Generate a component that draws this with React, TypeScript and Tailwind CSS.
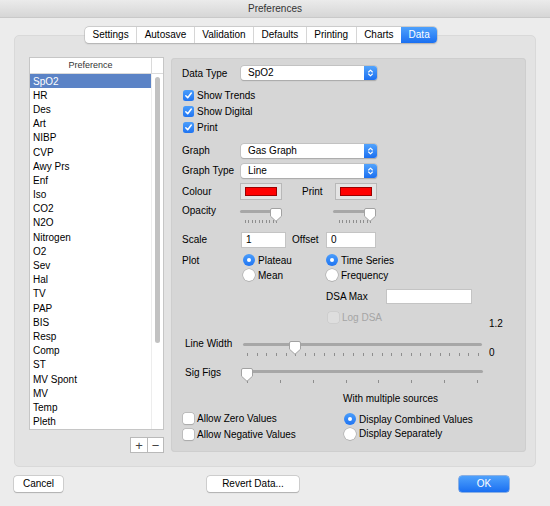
import React from 'react';

const prefs = [
  'SpO2', 'HR', 'Des', 'Art', 'NIBP', 'CVP', 'Awy Prs', 'Enf', 'Iso', 'CO2', 'N2O', 'Nitrogen', 'O2',
  'Sev', 'Hal', 'TV', 'PAP', 'BIS', 'Resp', 'Comp', 'ST', 'MV Spont', 'MV', 'Temp', 'Pleth',
];

const tabs = ['Settings', 'Autosave', 'Validation', 'Defaults', 'Printing', 'Charts', 'Data'];

function Select({ value }: { value: string }) {
  return (
    <div className="flex h-[14px] w-[136px] shrink-0 items-center rounded-[3px] bg-white shadow-[0_0_0_0.5px_#b3b3b3,0_0.5px_1px_rgba(0,0,0,0.25)]">
      <span className="flex-1 pl-[7px] leading-none">{value}</span>
      <div className="flex h-full w-[13px] items-center justify-center rounded-r-[3px] bg-linear-to-b from-[#52a3fc] to-[#1b6ff0]">
        <svg width="7" height="10" viewBox="0 0 7 10">
          <path
            d="M1.6 4 L3.5 2.1 L5.4 4 M1.6 6 L3.5 7.9 L5.4 6"
            fill="none"
            stroke="white"
            strokeWidth="1.1"
            strokeLinecap="round"
            strokeLinejoin="round"
          />
        </svg>
      </div>
    </div>
  );
}

function Checkbox({ checked, disabled }: { checked?: boolean; disabled?: boolean }) {
  if (checked) {
    return (
      <div className="flex h-[11px] w-[11px] shrink-0 items-center justify-center rounded-[2.5px] bg-linear-to-b from-[#4a9dfb] to-[#1f74f2]">
        <svg width="9" height="9" viewBox="0 0 9 9">
          <path d="M1.8 4.8 L3.7 6.8 L7.3 2" fill="none" stroke="white" strokeWidth="1.5" strokeLinecap="round" strokeLinejoin="round" />
        </svg>
      </div>
    );
  }
  return (
    <div
      className={`h-[11px] w-[11px] shrink-0 rounded-[2.5px] ${
        disabled
          ? 'bg-[#dedede] shadow-[0_0_0_0.5px_#c6c6c6]'
          : 'bg-white shadow-[0_0_0_0.5px_#a9a9a9,0_0.5px_1px_rgba(0,0,0,0.2)]'
      }`}
    />
  );
}

function Radio({ checked }: { checked?: boolean }) {
  if (checked) {
    return (
      <div className="flex h-[12px] w-[12px] shrink-0 items-center justify-center rounded-full bg-linear-to-b from-[#4a9dfb] to-[#1f74f2]">
        <div className="h-[4px] w-[4px] rounded-full bg-white" />
      </div>
    );
  }
  return <div className="h-[12px] w-[12px] shrink-0 rounded-full bg-white shadow-[0_0_0_0.5px_#a3a3a3,0_0.5px_1px_rgba(0,0,0,0.2)]" />;
}

function ColourWell() {
  return (
    <div className="flex h-[17px] w-[42px] shrink-0 border border-[#b8b8b8] bg-[#e4e4e4] px-[4px] py-[3px]">
      <div className="flex-1 border border-[#9a0000] bg-[#ff0000]" />
    </div>
  );
}

function TextField({ value, className }: { value?: string; className: string }) {
  return (
    <div className={`flex shrink-0 items-center border border-[#c4c4c4] bg-white pl-[4px] leading-none ${className}`}>
      {value}
    </div>
  );
}

function Slider({
  className,
  width,
  ticks,
  insetLeft,
  insetRight,
  value,
}: {
  className: string;
  width: number;
  ticks: number;
  insetLeft: number;
  insetRight: number;
  value: number;
}) {
  const span = width - insetLeft - insetRight;
  const pos = (i: number) => insetLeft + (span * i) / (ticks - 1);
  return (
    <div className={`relative h-[15px] shrink-0 ${className}`}>
      <div className="absolute left-0 right-0 top-[2px] h-[3px] rounded-full bg-[#a7a7a7]" />
      {Array.from({ length: ticks }).map((_, i) => (
        <div key={i} className="absolute top-[12px] h-[3px] w-px bg-[#8e8e8e]" style={{ left: Math.round(pos(i)) }} />
      ))}
      <svg className="absolute top-0" style={{ left: pos(value) - 6 }} width="12" height="14" viewBox="0 0 12 14">
        <path
          d="M2 0.5 H10 Q11.5 0.5 11.5 2 V8.2 L6 13.3 L0.5 8.2 V2 Q0.5 0.5 2 0.5 Z"
          fill="white"
          stroke="#a2a2a2"
        />
      </svg>
    </div>
  );
}

function Button({ label, className, primary }: { label: string; className: string; primary?: boolean }) {
  return (
    <div
      className={`flex h-[16px] shrink-0 items-center justify-center rounded-[3px] leading-none ${
        primary
          ? 'bg-linear-to-b from-[#4ea1fc] to-[#1a6ff1] text-white shadow-[0_0_0_0.5px_#2a72d8]'
          : 'bg-white shadow-[0_0_0_0.5px_#b3b3b3,0_0.5px_1px_rgba(0,0,0,0.25)]'
      } ${className}`}
    >
      {label}
    </div>
  );
}

function PreferenceList() {
  return (
    <div className="flex w-[135px] shrink-0 flex-col">
      <div className="flex h-[373px] flex-col overflow-hidden border border-[#c6c6c6] bg-white">
        <div className="flex h-[16px] shrink-0 border-b border-[#dadada]">
          <div className="flex flex-1 items-center justify-center text-[9px] text-[#333]">Preference</div>
          <div className="w-[12px] border-l border-[#dadada]" />
        </div>
        <div className="flex min-h-0 flex-1">
          <div className="flex-1 overflow-hidden">
            {prefs.map((p, i) => (
              <div
                key={p}
                className={`flex h-[14.2px] items-center pl-[3px] ${i === 0 ? 'bg-[#5b83c6] text-white' : 'text-black'}`}
              >
                {p}
              </div>
            ))}
          </div>
          <div className="w-[12px] border-l border-[#ededed] px-[3px] pt-[3px]">
            <div className="h-[266px] rounded-full bg-[#c2c2c2]" />
          </div>
        </div>
      </div>
      <div className="mt-[7px] flex justify-end">
        <div className="flex h-[16px] overflow-hidden border border-[#b9b9b9] bg-white text-[13px] leading-none text-[#444]">
          <div className="flex w-[16px] items-center justify-center">+</div>
          <div className="flex w-[16px] items-center justify-center border-l border-[#b9b9b9]">−</div>
        </div>
      </div>
    </div>
  );
}

function DataPanel() {
  return (
    <div className="ml-[7px] mt-[1px] flex h-[394px] w-[355px] shrink-0 flex-col rounded-[4px] bg-[#d6d6d6] pl-[11px] shadow-[inset_0_0_0_1px_#cecece]">
      <div className="mt-[8px] flex h-[14px] items-center">
        <span className="w-[59px] shrink-0">Data Type</span>
        <Select value="SpO2" />
      </div>

      <div className="mt-[8px] flex flex-col">
        {['Show Trends', 'Show Digital', 'Print'].map((t) => (
          <div key={t} className="ml-[1px] flex h-[15.66px] items-center gap-[3px]">
            <Checkbox checked />
            <span>{t}</span>
          </div>
        ))}
      </div>

      <div className="mt-[9px] flex h-[14px] items-center">
        <span className="w-[59px] shrink-0">Graph</span>
        <Select value="Gas Graph" />
      </div>
      <div className="mt-[6px] flex h-[14px] items-center">
        <span className="w-[59px] shrink-0">Graph Type</span>
        <Select value="Line" />
      </div>

      <div className="mt-[5px] flex h-[17px] items-center">
        <span className="w-[58px] shrink-0">Colour</span>
        <ColourWell />
        <span className="ml-[20px] w-[33px] shrink-0">Print</span>
        <ColourWell />
      </div>

      <div className="mt-[5px] flex h-[18px] items-start">
        <span className="w-[58px] shrink-0 leading-[12px]">Opacity</span>
        <Slider className="mt-[3px] w-[41px]" width={41} ticks={10} insetLeft={5} insetRight={5} value={9} />
        <Slider className="ml-[52px] mt-[3px] w-[43px]" width={43} ticks={10} insetLeft={6} insetRight={6} value={9} />
      </div>

      <div className="mt-[9px] flex h-[16px] items-center">
        <span className="w-[59px] shrink-0">Scale</span>
        <TextField value="1" className="h-[16px] w-[45px]" />
        <span className="ml-[6px] w-[34px] shrink-0">Offset</span>
        <TextField value="0" className="h-[16px] w-[50px]" />
      </div>

      <div className="mt-[5px] flex flex-col">
        <div className="flex h-[15px] items-center">
          <span className="w-[61px] shrink-0">Plot</span>
          <div className="flex w-[83px] shrink-0 items-center gap-[3px]">
            <Radio checked />
            <span>Plateau</span>
          </div>
          <div className="flex items-center gap-[3px]">
            <Radio checked />
            <span>Time Series</span>
          </div>
        </div>
        <div className="flex h-[15px] items-center">
          <span className="w-[61px] shrink-0" />
          <div className="flex w-[83px] shrink-0 items-center gap-[3px]">
            <Radio />
            <span>Mean</span>
          </div>
          <div className="flex items-center gap-[3px]">
            <Radio />
            <span>Frequency</span>
          </div>
        </div>
      </div>

      <div className="mt-[6px] flex h-[15px] items-center">
        <span className="ml-[144px] w-[60px] shrink-0">DSA Max</span>
        <TextField className="h-[15px] w-[86px]" />
      </div>

      <div className="mt-[7px] flex h-[19px] items-start">
        <div className="ml-[146px] flex h-[14px] w-[161px] shrink-0 items-center gap-[3px] text-[#a5a5a5]">
          <Checkbox disabled />
          <span>Log DSA</span>
        </div>
        <span className="mt-[7px] leading-[12px]">1.2</span>
      </div>

      <div className="ml-[3px] mt-[8px] flex h-[19px] items-start">
        <span className="w-[58px] shrink-0 leading-[12px]">Line Width</span>
        <Slider className="mt-[3px] w-[239px]" width={239} ticks={25} insetLeft={4} insetRight={4} value={5} />
        <span className="ml-[7px] mt-[9px] leading-[12px]">0</span>
      </div>

      <div className="ml-[3px] mt-[10px] flex h-[17px] items-start">
        <span className="w-[57px] shrink-0 leading-[12px]">Sig Figs</span>
        <Slider className="mt-[1px] w-[241px]" width={241} ticks={8} insetLeft={5} insetRight={6} value={0} />
      </div>

      <div className="ml-[161px] mt-[9px] leading-[12px]">With multiple sources</div>

      <div className="mt-[5px] flex">
        <div className="ml-[1px] flex w-[161px] shrink-0 flex-col">
          <div className="flex h-[16.6px] items-center gap-[3px]">
            <Checkbox />
            <span>Allow Zero Values</span>
          </div>
          <div className="flex h-[16.6px] items-center gap-[3px]">
            <Checkbox />
            <span>Allow Negative Values</span>
          </div>
        </div>
        <div className="mt-[2px] flex flex-col">
          <div className="flex h-[14.6px] items-center gap-[3px]">
            <Radio checked />
            <span>Display Combined Values</span>
          </div>
          <div className="flex h-[14.6px] items-center gap-[3px]">
            <Radio />
            <span>Display Separately</span>
          </div>
        </div>
      </div>
    </div>
  );
}

export default function App() {
  return (
    <div className="flex h-[506px] w-[550px] flex-col overflow-hidden bg-[#ececec] font-['Liberation_Sans',Arial,sans-serif] text-[10px] text-black">
      <div className="flex h-[18px] shrink-0 items-center justify-center border-b border-[#c9c9c9] bg-linear-to-b from-[#ebebeb] to-[#d6d6d6] text-[#333]">
        Preferences
      </div>

      <div className="relative z-10 ml-[85px] mt-[9px] flex h-[16px] self-start overflow-hidden rounded-[4px] bg-white shadow-[0_0_0_0.5px_#b5b5b5,0_0.5px_1.5px_rgba(0,0,0,0.22)]">
        {tabs.map((t, i) => (
          <div
            key={t}
            className={`flex items-center px-[7.5px] leading-none ${
              t === 'Data'
                ? 'bg-linear-to-b from-[#4ea1fc] to-[#1a6ff1] text-white'
                : i > 0
                  ? 'border-l border-[#d6d6d6]'
                  : ''
            }`}
          >
            {t}
          </div>
        ))}
      </div>

      <div className="mx-[14px] -mt-[8px] flex h-[432px] shrink-0 rounded-[5px] border border-[#d9d9d9] bg-[#e3e3e3] pl-[14px] pt-[21px]">
        <PreferenceList />
        <DataPanel />
      </div>

      <div className="mt-[9px] flex h-[16px] shrink-0">
        <Button label="Cancel" className="ml-[14px] w-[49px]" />
        <Button label="Revert Data..." className="ml-[144px] w-[92px]" />
        <Button label="OK" primary className="ml-[160px] w-[50px]" />
      </div>
    </div>
  );
}
